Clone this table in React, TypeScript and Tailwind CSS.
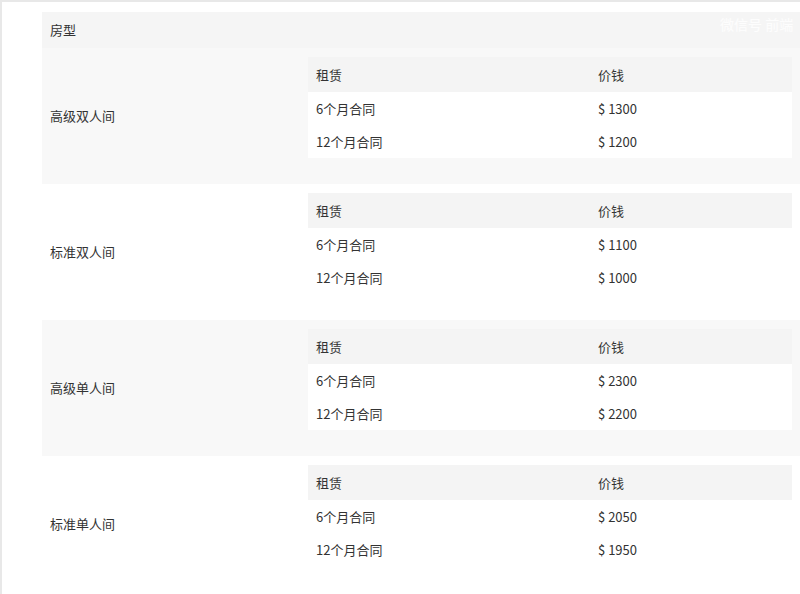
const rooms = [
  { name: "高级双人间", prices: ["$ 1300", "$ 1200"] },
  { name: "标准双人间", prices: ["$ 1100", "$ 1000"] },
  { name: "高级单人间", prices: ["$ 2300", "$ 2200"] },
  { name: "标准单人间", prices: ["$ 2050", "$ 1950"] },
];

function PriceTable({ prices }: { prices: string[] }) {
  return (
    <div className="w-[484px] flex flex-col">
      <div className="flex h-[35px] items-center bg-[#f4f4f4]">
        <div className="w-[282px] pl-2">租赁</div>
        <div className="pl-2">价钱</div>
      </div>
      <div className="flex flex-col bg-white">
        <div className="flex h-[33px] items-center">
          <div className="w-[282px] pl-2">6个月合同</div>
          <div className="pl-2">{prices[0]}</div>
        </div>
        <div className="flex h-[33px] items-center">
          <div className="w-[282px] pl-2">12个月合同</div>
          <div className="pl-2">{prices[1]}</div>
        </div>
      </div>
    </div>
  );
}

export default function App() {
  return (
    <div className="w-[800px] h-[594px] bg-white border-t-2 border-l-2 border-[#e8e8e8] overflow-hidden text-[13px] text-[#333] font-['Noto_Sans_CJK_SC','Noto_Sans',sans-serif]">
      <div className="ml-[40px] mt-[10px] w-[780px] flex flex-col">
        <div className="h-[36px] flex items-center pl-2 bg-[#f5f5f5] relative">
          房型
          <span className="absolute left-[678px] top-[2px] text-[14px] text-white/80">微信号 前端</span>
        </div>
        {rooms.map((r, i) => (
          <div
            key={r.name}
            className={`flex h-[136px] ${i % 2 === 0 ? "bg-[#f8f8f8]" : "bg-white"}`}
          >
            <div className="w-[266px] pl-2 flex items-center">{r.name}</div>
            <div className="pt-[9px]">
              <PriceTable prices={r.prices} />
            </div>
          </div>
        ))}
      </div>
    </div>
  );
}
